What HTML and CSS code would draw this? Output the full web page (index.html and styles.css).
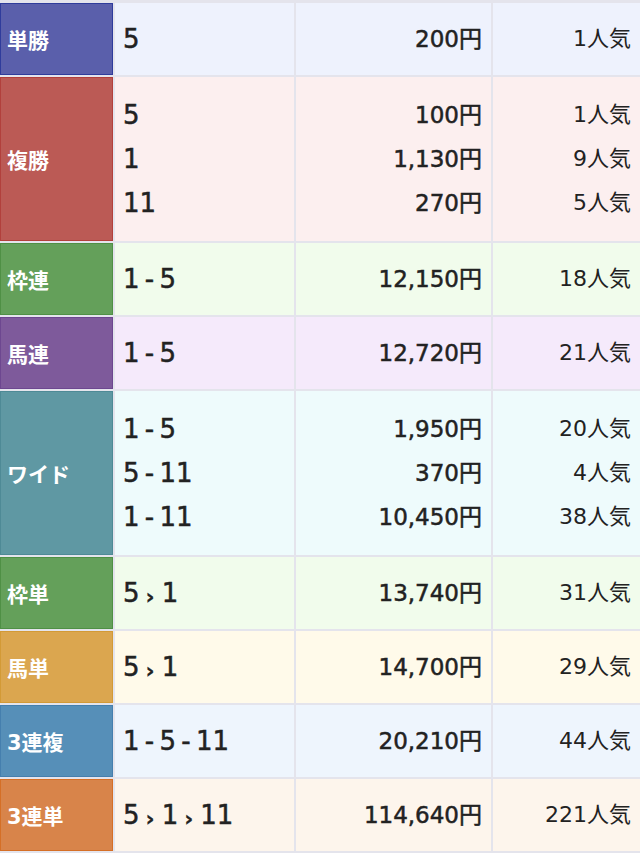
FILE: index.html
```html
<!DOCTYPE html>
<html lang="ja">
<head>
<meta charset="utf-8">
<link rel="stylesheet" href="styles.css">
</head>
<body>
<div class="payout">
  <div class="lab lab-tan">単勝</div>
  <div class="c num bg-tan"><div class="ln">5</div></div>
  <div class="c yen bg-tan"><div class="ln">200円</div></div>
  <div class="c pop bg-tan"><div class="ln">1人気</div></div>

  <div class="lab lab-fuku">複勝</div>
  <div class="c num multi bg-fuku"><div class="ln">5</div><div class="ln">1</div><div class="ln">11</div></div>
  <div class="c yen multi bg-fuku"><div class="ln">100円</div><div class="ln">1,130円</div><div class="ln">270円</div></div>
  <div class="c pop multi bg-fuku"><div class="ln">1人気</div><div class="ln">9人気</div><div class="ln">5人気</div></div>

  <div class="lab lab-waku">枠連</div>
  <div class="c num bg-waku"><div class="ln">1 - 5</div></div>
  <div class="c yen bg-waku"><div class="ln">12,150円</div></div>
  <div class="c pop bg-waku"><div class="ln">18人気</div></div>

  <div class="lab lab-umaren">馬連</div>
  <div class="c num bg-umaren"><div class="ln">1 - 5</div></div>
  <div class="c yen bg-umaren"><div class="ln">12,720円</div></div>
  <div class="c pop bg-umaren"><div class="ln">21人気</div></div>

  <div class="lab lab-wide">ワイド</div>
  <div class="c num multi bg-wide"><div class="ln">1 - 5</div><div class="ln">5 - 11</div><div class="ln">1 - 11</div></div>
  <div class="c yen multi bg-wide"><div class="ln">1,950円</div><div class="ln">370円</div><div class="ln">10,450円</div></div>
  <div class="c pop multi bg-wide"><div class="ln">20人気</div><div class="ln">4人気</div><div class="ln">38人気</div></div>

  <div class="lab lab-waku">枠単</div>
  <div class="c num bg-waku"><div class="ln">5<span class="arr">›</span>1</div></div>
  <div class="c yen bg-waku"><div class="ln">13,740円</div></div>
  <div class="c pop bg-waku"><div class="ln">31人気</div></div>

  <div class="lab lab-umatan">馬単</div>
  <div class="c num bg-umatan"><div class="ln">5<span class="arr">›</span>1</div></div>
  <div class="c yen bg-umatan"><div class="ln">14,700円</div></div>
  <div class="c pop bg-umatan"><div class="ln">29人気</div></div>

  <div class="lab lab-sanfuku">3連複</div>
  <div class="c num bg-sanfuku"><div class="ln">1 - 5 - 11</div></div>
  <div class="c yen bg-sanfuku"><div class="ln">20,210円</div></div>
  <div class="c pop bg-sanfuku"><div class="ln">44人気</div></div>

  <div class="lab lab-santan">3連単</div>
  <div class="c num bg-santan"><div class="ln">5<span class="arr">›</span>1<span class="arr">›</span>11</div></div>
  <div class="c yen bg-santan"><div class="ln">114,640円</div></div>
  <div class="c pop bg-santan"><div class="ln">221人気</div></div>
</div>
</body>
</html>
```

FILE: styles.css
```css
html, body {
  margin: 0;
  padding: 0;
  background: #e4e4ec;
}
body {
  font-family: "DejaVu Sans", "Noto Sans CJK JP", sans-serif;
  color: #222;
}
.payout {
  display: grid;
  grid-template-columns: 113px 179px 195px 1fr;
  gap: 2px;
  padding: 3px 0 2px 0;
  background: #e4e4ec;
}
.lab {
  display: flex;
  align-items: center;
  padding-left: 6px;
  color: #fff;
  font-family: "DejaVu Sans", "Noto Sans CJK JP", sans-serif;
  font-weight: 700;
  font-size: 21px;
  box-sizing: border-box;
  border: 1px solid transparent;
}
.c {
  display: flex;
  flex-direction: column;
  justify-content: center;
  padding: 14px 9px 14px 8px;
  min-height: 44px;
}
.c.multi {
  padding-top: 16px;
  padding-bottom: 16px;
}
.ln {
  height: 44px;
  line-height: 44px;
  white-space: nowrap;
}
.num {
  font-size: 26px;
  font-weight: 400;
  word-spacing: -3px;
  -webkit-text-stroke: 0.5px #222;
}
.arr {
  display: inline-block;
  font-size: 22px;
  font-weight: 700;
  margin: 0 7px 0 6px;
  position: relative;
  top: 2px;
  -webkit-text-stroke: 0.3px #222;
}
.yen {
  text-align: right;
  font-size: 23px;
  font-weight: 400;
  -webkit-text-stroke: 0.5px #222;
}
.pop {
  text-align: right;
  font-size: 22px;
  font-weight: 400;
}

.lab-tan { background: #5a5fab; border-color: #2f3c9c; }
.bg-tan { background: #eef2fd; }
.lab-fuku { background: #bb5a55; border-color: #b2403c; }
.bg-fuku { background: #fcefef; }
.lab-waku { background: #64a05a; border-color: #4f9045; }
.bg-waku { background: #f1fcec; }
.lab-umaren { background: #7e5a9b; border-color: #6d4790; }
.bg-umaren { background: #f5eafb; }
.lab-wide { background: #5f98a3; border-color: #4e8a96; }
.bg-wide { background: #eefbfc; }
.lab-umatan { background: #dba64f; border-color: #d39a36; }
.bg-umatan { background: #fffaea; }
.lab-sanfuku { background: #568fb8; border-color: #457fae; }
.bg-sanfuku { background: #eef5fd; }
.lab-santan { background: #d8844a; border-color: #d56f26; }
.bg-santan { background: #fdf5ec; }
```
